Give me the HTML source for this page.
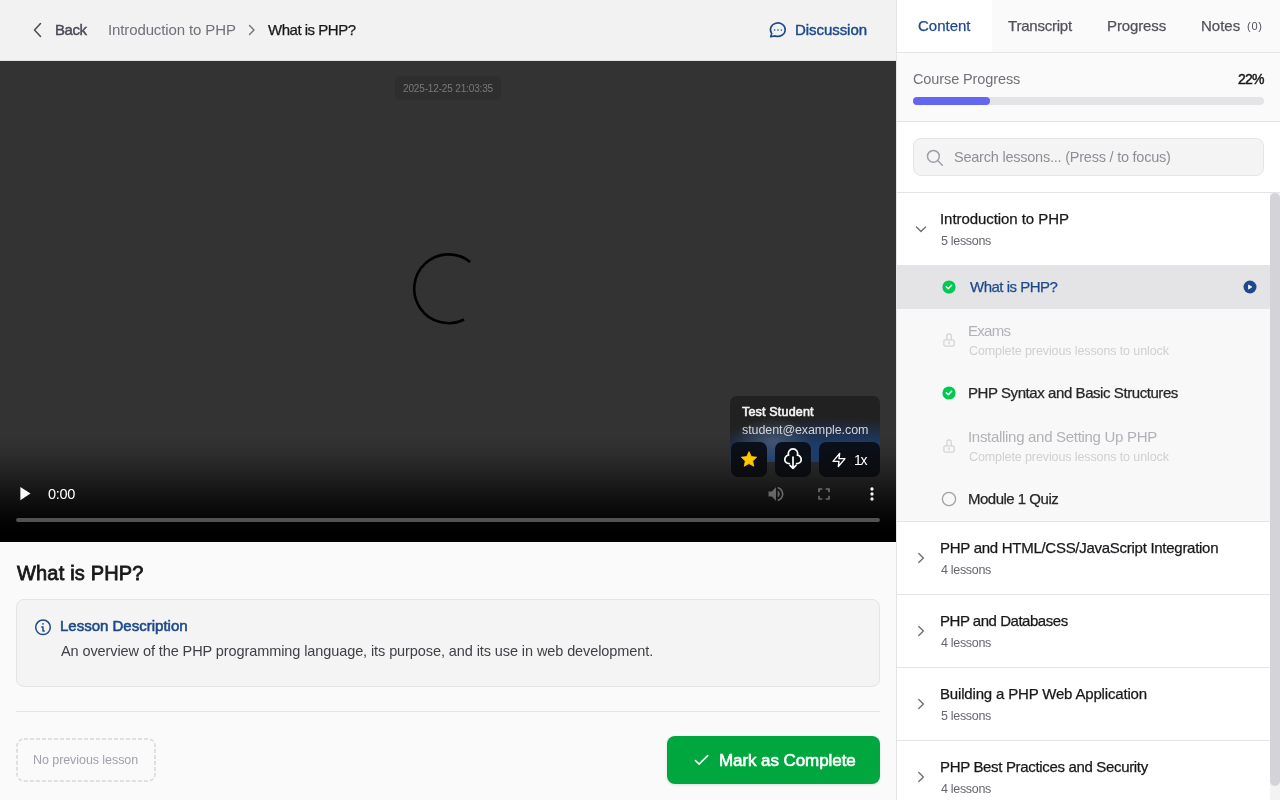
<!DOCTYPE html><html><head><meta charset="utf-8"><style>*{box-sizing:border-box;margin:0;padding:0}
html,body{width:1280px;height:800px;overflow:hidden;background:#fafafa;font-family:"Liberation Sans",sans-serif;color:#18181b}
svg{position:absolute;overflow:visible}
.t{position:absolute;white-space:nowrap;line-height:1;will-change:transform}
.bl{display:inline-block;width:0;height:0}
</style></head><body>
<!-- header -->
<div style="position:absolute;left:0;top:0;width:896px;height:61px;background:#f2f2f2;border-bottom:1px solid #e4e4e7"></div>
<svg style="left:0;top:0" width="1" height="1"><path d="M40.5 23.5 L34.5 30 L40.5 36.5" fill="none" stroke="#4a4a55" stroke-width="1.5" stroke-linecap="round" stroke-linejoin="round"/></svg>
<svg style="left:0;top:0" width="1" height="1"><path d="M249.5 25.5 L254 30 L249.5 34.5" fill="none" stroke="#71717a" stroke-width="1.4" stroke-linecap="round" stroke-linejoin="round"/></svg>
<svg style="left:0;top:0" width="1" height="1"><path d="M771.7 33.4 L770.7 36.7 L775.2 35.9 A7.4 6.7 0 1 0 771.7 33.4 Z" fill="none" stroke="#1e4a8a" stroke-width="1.6" stroke-linejoin="round"/><path d="M774.6 30h.01M778 30h.01M781.4 30h.01" stroke="#1e4a8a" stroke-width="1.6" stroke-linecap="round"/></svg>
<!-- video -->
<div style="position:absolute;left:0;top:61px;width:896px;height:481px;background:#333333;overflow:hidden">
  <div style="position:absolute;left:0;top:371px;width:896px;height:110px;background:linear-gradient(to bottom,rgba(0,0,0,0) 0%,rgba(0,0,0,0.02) 6%,rgba(0,0,0,0.06) 12%,rgba(0,0,0,0.13) 20%,rgba(0,0,0,0.25) 30%,rgba(0,0,0,0.39) 40%,rgba(0,0,0,0.53) 50%,rgba(0,0,0,0.67) 60%,rgba(0,0,0,0.80) 70%,rgba(0,0,0,0.92) 80%,rgba(0,0,0,0.97) 86%,#000 92%,#000 100%)"></div>
  <div style="position:absolute;left:395px;top:15px;width:106px;height:24px;border-radius:5px;background:#2e2e2e"></div>
  <div style="position:absolute;left:16px;top:457px;width:864px;height:4px;border-radius:2px;background:#525252"></div>
</div>
<svg style="left:0;top:0" width="1" height="1"><path d="M 470.1 261.9 A 34.4 34.4 0 1 0 464.0 319.5" fill="none" stroke="#000" stroke-width="2.6"/></svg>
<svg style="left:0;top:0" width="1" height="1"><path d="M20.4 487 L20.4 500.2 L30.5 493.6 Z" fill="#fff"/>
<g fill="#6a6a6a"><rect x="775" y="487" width="1" height="1" fill-opacity="0.27"/><rect x="777" y="487" width="1" height="1" fill-opacity="0.33"/><rect x="778" y="487" width="1" height="1" fill-opacity="0.89"/><rect x="779" y="487" width="1" height="1" fill-opacity="0.44"/><rect x="774" y="488" width="1" height="1" fill-opacity="0.24"/><rect x="775" y="488" width="1" height="1" fill-opacity="0.97"/><rect x="777" y="488" width="1" height="1" fill-opacity="0.19"/><rect x="778" y="488" width="1" height="1" fill-opacity="0.87"/><rect x="779" y="488" width="1" height="1" fill-opacity="1.00"/><rect x="780" y="488" width="1" height="1" fill-opacity="0.81"/><rect x="781" y="488" width="1" height="1" fill-opacity="0.10"/><rect x="773" y="489" width="1" height="1" fill-opacity="0.24"/><rect x="774" y="489" width="1" height="1" fill-opacity="0.94"/><rect x="775" y="489" width="1" height="1" fill-opacity="0.99"/><rect x="779" y="489" width="1" height="1" fill-opacity="0.44"/><rect x="780" y="489" width="1" height="1" fill-opacity="0.99"/><rect x="781" y="489" width="1" height="1" fill-opacity="0.87"/><rect x="772" y="490" width="1" height="1" fill-opacity="0.22"/><rect x="773" y="490" width="1" height="1" fill-opacity="0.94"/><rect x="774" y="490" width="1" height="1" fill-opacity="0.97"/><rect x="775" y="490" width="1" height="1" fill-opacity="0.97"/><rect x="780" y="490" width="1" height="1" fill-opacity="0.42"/><rect x="781" y="490" width="1" height="1" fill-opacity="0.97"/><rect x="782" y="490" width="1" height="1" fill-opacity="0.47"/><rect x="768" y="491" width="1" height="1" fill-opacity="0.23"/><rect x="769" y="491" width="1" height="1" fill-opacity="0.48"/><rect x="770" y="491" width="1" height="1" fill-opacity="0.48"/><rect x="771" y="491" width="1" height="1" fill-opacity="0.49"/><rect x="772" y="491" width="1" height="1" fill-opacity="0.92"/><rect x="773" y="491" width="1" height="1" fill-opacity="0.97"/><rect x="774" y="491" width="1" height="1" fill-opacity="0.97"/><rect x="775" y="491" width="1" height="1" fill-opacity="0.97"/><rect x="777" y="491" width="1" height="1" fill-opacity="0.32"/><rect x="778" y="491" width="1" height="1" fill-opacity="0.67"/><rect x="781" y="491" width="1" height="1" fill-opacity="0.84"/><rect x="782" y="491" width="1" height="1" fill-opacity="0.92"/><rect x="768" y="492" width="1" height="1" fill-opacity="0.47"/><rect x="769" y="492" width="1" height="1" fill-opacity="0.97"/><rect x="770" y="492" width="1" height="1" fill-opacity="0.96"/><rect x="771" y="492" width="1" height="1" fill-opacity="0.97"/><rect x="772" y="492" width="1" height="1" fill-opacity="0.96"/><rect x="773" y="492" width="1" height="1" fill-opacity="0.97"/><rect x="774" y="492" width="1" height="1" fill-opacity="0.96"/><rect x="775" y="492" width="1" height="1" fill-opacity="0.97"/><rect x="777" y="492" width="1" height="1" fill-opacity="0.32"/><rect x="778" y="492" width="1" height="1" fill-opacity="0.96"/><rect x="779" y="492" width="1" height="1" fill-opacity="0.36"/><rect x="781" y="492" width="1" height="1" fill-opacity="0.45"/><rect x="782" y="492" width="1" height="1" fill-opacity="0.96"/><rect x="783" y="492" width="1" height="1" fill-opacity="0.23"/><rect x="768" y="493" width="1" height="1" fill-opacity="0.47"/><rect x="769" y="493" width="1" height="1" fill-opacity="0.96"/><rect x="770" y="493" width="1" height="1" fill-opacity="0.96"/><rect x="771" y="493" width="1" height="1" fill-opacity="0.96"/><rect x="772" y="493" width="1" height="1" fill-opacity="0.96"/><rect x="773" y="493" width="1" height="1" fill-opacity="0.96"/><rect x="774" y="493" width="1" height="1" fill-opacity="0.96"/><rect x="775" y="493" width="1" height="1" fill-opacity="0.96"/><rect x="777" y="493" width="1" height="1" fill-opacity="0.32"/><rect x="778" y="493" width="1" height="1" fill-opacity="0.96"/><rect x="779" y="493" width="1" height="1" fill-opacity="0.64"/><rect x="781" y="493" width="1" height="1" fill-opacity="0.26"/><rect x="782" y="493" width="1" height="1" fill-opacity="0.96"/><rect x="783" y="493" width="1" height="1" fill-opacity="0.41"/><rect x="768" y="494" width="1" height="1" fill-opacity="0.47"/><rect x="769" y="494" width="1" height="1" fill-opacity="0.95"/><rect x="770" y="494" width="1" height="1" fill-opacity="0.95"/><rect x="771" y="494" width="1" height="1" fill-opacity="0.95"/><rect x="772" y="494" width="1" height="1" fill-opacity="0.95"/><rect x="773" y="494" width="1" height="1" fill-opacity="0.95"/><rect x="774" y="494" width="1" height="1" fill-opacity="0.95"/><rect x="775" y="494" width="1" height="1" fill-opacity="0.95"/><rect x="777" y="494" width="1" height="1" fill-opacity="0.32"/><rect x="778" y="494" width="1" height="1" fill-opacity="0.95"/><rect x="779" y="494" width="1" height="1" fill-opacity="0.64"/><rect x="781" y="494" width="1" height="1" fill-opacity="0.23"/><rect x="782" y="494" width="1" height="1" fill-opacity="0.95"/><rect x="783" y="494" width="1" height="1" fill-opacity="0.43"/><rect x="768" y="495" width="1" height="1" fill-opacity="0.47"/><rect x="769" y="495" width="1" height="1" fill-opacity="0.95"/><rect x="770" y="495" width="1" height="1" fill-opacity="0.95"/><rect x="771" y="495" width="1" height="1" fill-opacity="0.95"/><rect x="772" y="495" width="1" height="1" fill-opacity="0.95"/><rect x="773" y="495" width="1" height="1" fill-opacity="0.95"/><rect x="774" y="495" width="1" height="1" fill-opacity="0.95"/><rect x="775" y="495" width="1" height="1" fill-opacity="0.95"/><rect x="777" y="495" width="1" height="1" fill-opacity="0.32"/><rect x="778" y="495" width="1" height="1" fill-opacity="0.95"/><rect x="779" y="495" width="1" height="1" fill-opacity="0.34"/><rect x="781" y="495" width="1" height="1" fill-opacity="0.37"/><rect x="782" y="495" width="1" height="1" fill-opacity="0.95"/><rect x="783" y="495" width="1" height="1" fill-opacity="0.28"/><rect x="768" y="496" width="1" height="1" fill-opacity="0.21"/><rect x="769" y="496" width="1" height="1" fill-opacity="0.47"/><rect x="770" y="496" width="1" height="1" fill-opacity="0.46"/><rect x="771" y="496" width="1" height="1" fill-opacity="0.47"/><rect x="772" y="496" width="1" height="1" fill-opacity="0.88"/><rect x="773" y="496" width="1" height="1" fill-opacity="0.95"/><rect x="774" y="496" width="1" height="1" fill-opacity="0.93"/><rect x="775" y="496" width="1" height="1" fill-opacity="0.95"/><rect x="777" y="496" width="1" height="1" fill-opacity="0.32"/><rect x="778" y="496" width="1" height="1" fill-opacity="0.62"/><rect x="781" y="496" width="1" height="1" fill-opacity="0.74"/><rect x="782" y="496" width="1" height="1" fill-opacity="0.91"/><rect x="772" y="497" width="1" height="1" fill-opacity="0.21"/><rect x="773" y="497" width="1" height="1" fill-opacity="0.90"/><rect x="774" y="497" width="1" height="1" fill-opacity="0.94"/><rect x="775" y="497" width="1" height="1" fill-opacity="0.94"/><rect x="780" y="497" width="1" height="1" fill-opacity="0.38"/><rect x="781" y="497" width="1" height="1" fill-opacity="0.94"/><rect x="782" y="497" width="1" height="1" fill-opacity="0.56"/><rect x="773" y="498" width="1" height="1" fill-opacity="0.22"/><rect x="774" y="498" width="1" height="1" fill-opacity="0.90"/><rect x="775" y="498" width="1" height="1" fill-opacity="0.92"/><rect x="779" y="498" width="1" height="1" fill-opacity="0.40"/><rect x="780" y="498" width="1" height="1" fill-opacity="0.92"/><rect x="781" y="498" width="1" height="1" fill-opacity="0.82"/><rect x="782" y="498" width="1" height="1" fill-opacity="0.06"/><rect x="774" y="499" width="1" height="1" fill-opacity="0.24"/><rect x="775" y="499" width="1" height="1" fill-opacity="0.89"/><rect x="777" y="499" width="1" height="1" fill-opacity="0.16"/><rect x="778" y="499" width="1" height="1" fill-opacity="0.81"/><rect x="779" y="499" width="1" height="1" fill-opacity="0.92"/><rect x="780" y="499" width="1" height="1" fill-opacity="0.75"/><rect x="781" y="499" width="1" height="1" fill-opacity="0.09"/><rect x="775" y="500" width="1" height="1" fill-opacity="0.25"/><rect x="777" y="500" width="1" height="1" fill-opacity="0.30"/><rect x="778" y="500" width="1" height="1" fill-opacity="0.91"/><rect x="779" y="500" width="1" height="1" fill-opacity="0.49"/><rect x="777" y="501" width="1" height="1" fill-opacity="0.06"/></g>
<g fill="#6a6a6a"><rect x="818" y="488" width="1" height="1" fill-opacity="0.67"/><rect x="819" y="488" width="1" height="1" fill-opacity="0.80"/><rect x="820" y="488" width="1" height="1" fill-opacity="0.80"/><rect x="821" y="488" width="1" height="1" fill-opacity="0.80"/><rect x="822" y="488" width="1" height="1" fill-opacity="0.26"/><rect x="825" y="488" width="1" height="1" fill-opacity="0.26"/><rect x="826" y="488" width="1" height="1" fill-opacity="0.80"/><rect x="827" y="488" width="1" height="1" fill-opacity="0.80"/><rect x="828" y="488" width="1" height="1" fill-opacity="0.80"/><rect x="829" y="488" width="1" height="1" fill-opacity="0.65"/><rect x="818" y="489" width="1" height="1" fill-opacity="0.87"/><rect x="819" y="489" width="1" height="1" fill-opacity="1.00"/><rect x="820" y="489" width="1" height="1" fill-opacity="0.79"/><rect x="821" y="489" width="1" height="1" fill-opacity="0.79"/><rect x="822" y="489" width="1" height="1" fill-opacity="0.25"/><rect x="825" y="489" width="1" height="1" fill-opacity="0.25"/><rect x="826" y="489" width="1" height="1" fill-opacity="0.79"/><rect x="827" y="489" width="1" height="1" fill-opacity="0.79"/><rect x="828" y="489" width="1" height="1" fill-opacity="1.00"/><rect x="829" y="489" width="1" height="1" fill-opacity="0.87"/><rect x="818" y="490" width="1" height="1" fill-opacity="0.87"/><rect x="819" y="490" width="1" height="1" fill-opacity="0.87"/><rect x="828" y="490" width="1" height="1" fill-opacity="0.87"/><rect x="829" y="490" width="1" height="1" fill-opacity="0.87"/><rect x="818" y="491" width="1" height="1" fill-opacity="0.86"/><rect x="819" y="491" width="1" height="1" fill-opacity="0.86"/><rect x="828" y="491" width="1" height="1" fill-opacity="0.86"/><rect x="829" y="491" width="1" height="1" fill-opacity="0.86"/><rect x="818" y="492" width="1" height="1" fill-opacity="0.19"/><rect x="819" y="492" width="1" height="1" fill-opacity="0.20"/><rect x="828" y="492" width="1" height="1" fill-opacity="0.19"/><rect x="829" y="492" width="1" height="1" fill-opacity="0.20"/><rect x="818" y="495" width="1" height="1" fill-opacity="0.19"/><rect x="819" y="495" width="1" height="1" fill-opacity="0.19"/><rect x="828" y="495" width="1" height="1" fill-opacity="0.19"/><rect x="829" y="495" width="1" height="1" fill-opacity="0.19"/><rect x="818" y="496" width="1" height="1" fill-opacity="0.82"/><rect x="819" y="496" width="1" height="1" fill-opacity="0.83"/><rect x="828" y="496" width="1" height="1" fill-opacity="0.82"/><rect x="829" y="496" width="1" height="1" fill-opacity="0.83"/><rect x="818" y="497" width="1" height="1" fill-opacity="0.82"/><rect x="819" y="497" width="1" height="1" fill-opacity="0.82"/><rect x="828" y="497" width="1" height="1" fill-opacity="0.82"/><rect x="829" y="497" width="1" height="1" fill-opacity="0.82"/><rect x="818" y="498" width="1" height="1" fill-opacity="0.81"/><rect x="819" y="498" width="1" height="1" fill-opacity="0.93"/><rect x="820" y="498" width="1" height="1" fill-opacity="0.73"/><rect x="821" y="498" width="1" height="1" fill-opacity="0.73"/><rect x="822" y="498" width="1" height="1" fill-opacity="0.23"/><rect x="825" y="498" width="1" height="1" fill-opacity="0.24"/><rect x="826" y="498" width="1" height="1" fill-opacity="0.73"/><rect x="827" y="498" width="1" height="1" fill-opacity="0.73"/><rect x="828" y="498" width="1" height="1" fill-opacity="0.93"/><rect x="829" y="498" width="1" height="1" fill-opacity="0.81"/><rect x="818" y="499" width="1" height="1" fill-opacity="0.61"/><rect x="819" y="499" width="1" height="1" fill-opacity="0.72"/><rect x="820" y="499" width="1" height="1" fill-opacity="0.72"/><rect x="821" y="499" width="1" height="1" fill-opacity="0.72"/><rect x="822" y="499" width="1" height="1" fill-opacity="0.23"/><rect x="825" y="499" width="1" height="1" fill-opacity="0.24"/><rect x="826" y="499" width="1" height="1" fill-opacity="0.73"/><rect x="827" y="499" width="1" height="1" fill-opacity="0.72"/><rect x="828" y="499" width="1" height="1" fill-opacity="0.72"/><rect x="829" y="499" width="1" height="1" fill-opacity="0.60"/></g>
<g fill="#fff"><rect x="870" y="487" width="1" height="1" fill-opacity="0.09"/><rect x="871" y="487" width="1" height="1" fill-opacity="0.56"/><rect x="872" y="487" width="1" height="1" fill-opacity="0.56"/><rect x="873" y="487" width="1" height="1" fill-opacity="0.07"/><rect x="870" y="488" width="1" height="1" fill-opacity="0.50"/><rect x="871" y="488" width="1" height="1" fill-opacity="1.00"/><rect x="872" y="488" width="1" height="1" fill-opacity="1.00"/><rect x="873" y="488" width="1" height="1" fill-opacity="0.46"/><rect x="870" y="489" width="1" height="1" fill-opacity="0.49"/><rect x="871" y="489" width="1" height="1" fill-opacity="0.99"/><rect x="872" y="489" width="1" height="1" fill-opacity="0.99"/><rect x="873" y="489" width="1" height="1" fill-opacity="0.49"/><rect x="870" y="490" width="1" height="1" fill-opacity="0.07"/><rect x="871" y="490" width="1" height="1" fill-opacity="0.54"/><rect x="872" y="490" width="1" height="1" fill-opacity="0.54"/><rect x="873" y="490" width="1" height="1" fill-opacity="0.07"/><rect x="871" y="492" width="1" height="1" fill-opacity="0.55"/><rect x="872" y="492" width="1" height="1" fill-opacity="0.53"/><rect x="873" y="492" width="1" height="1" fill-opacity="0.07"/><rect x="870" y="493" width="1" height="1" fill-opacity="0.47"/><rect x="871" y="493" width="1" height="1" fill-opacity="0.96"/><rect x="872" y="493" width="1" height="1" fill-opacity="0.96"/><rect x="873" y="493" width="1" height="1" fill-opacity="0.45"/><rect x="870" y="494" width="1" height="1" fill-opacity="0.47"/><rect x="871" y="494" width="1" height="1" fill-opacity="0.95"/><rect x="872" y="494" width="1" height="1" fill-opacity="0.95"/><rect x="873" y="494" width="1" height="1" fill-opacity="0.47"/><rect x="870" y="495" width="1" height="1" fill-opacity="0.07"/><rect x="871" y="495" width="1" height="1" fill-opacity="0.53"/><rect x="872" y="495" width="1" height="1" fill-opacity="0.53"/><rect x="873" y="495" width="1" height="1" fill-opacity="0.07"/><rect x="870" y="497" width="1" height="1" fill-opacity="0.06"/><rect x="871" y="497" width="1" height="1" fill-opacity="0.52"/><rect x="872" y="497" width="1" height="1" fill-opacity="0.52"/><rect x="873" y="497" width="1" height="1" fill-opacity="0.06"/><rect x="870" y="498" width="1" height="1" fill-opacity="0.46"/><rect x="871" y="498" width="1" height="1" fill-opacity="0.92"/><rect x="872" y="498" width="1" height="1" fill-opacity="0.92"/><rect x="873" y="498" width="1" height="1" fill-opacity="0.44"/><rect x="870" y="499" width="1" height="1" fill-opacity="0.46"/><rect x="871" y="499" width="1" height="1" fill-opacity="0.92"/><rect x="872" y="499" width="1" height="1" fill-opacity="0.92"/><rect x="873" y="499" width="1" height="1" fill-opacity="0.46"/><rect x="870" y="500" width="1" height="1" fill-opacity="0.06"/><rect x="871" y="500" width="1" height="1" fill-opacity="0.52"/><rect x="872" y="500" width="1" height="1" fill-opacity="0.52"/><rect x="873" y="500" width="1" height="1" fill-opacity="0.06"/></g></svg>
<!-- user card -->
<div style="position:absolute;left:730px;top:396px;width:150px;height:65.5px;border-radius:7px 7px 0 0;overflow:hidden;background:#212121">
<div style="position:absolute;left:0;top:0;width:150px;height:66px;background:radial-gradient(ellipse 175px 46px at 112px 68px,rgba(29,61,112,1) 0%,rgba(29,61,112,0.92) 45%,rgba(29,61,112,0) 100%)"></div>
<div style="position:absolute;left:0;top:20px;width:150px;height:60px;background:radial-gradient(ellipse 40px 24px at 43px 25px,rgba(100,118,145,0.5) 0%,rgba(100,118,145,0) 100%)"></div>
</div>
<div style="position:absolute;left:731px;top:442px;width:36px;height:35px;border-radius:7px;background:linear-gradient(to bottom,#0a111b 0%,#0a0e15 45%,#0b0b0c 100%)"></div>
<div style="position:absolute;left:775px;top:442px;width:36px;height:35px;border-radius:7px;background:linear-gradient(to bottom,#0a111b 0%,#0a0e15 45%,#0b0b0c 100%)"></div>
<div style="position:absolute;left:819px;top:442px;width:61px;height:35px;border-radius:7px;background:linear-gradient(to bottom,#0a111b 0%,#0a0e15 45%,#0b0b0c 100%)"></div>
<svg style="left:0;top:0" width="1" height="1"><path d="M749.00 451.60 L751.29 456.54 L756.70 457.20 L752.71 460.91 L753.76 466.25 L749.00 463.60 L744.24 466.25 L745.29 460.91 L741.30 457.20 L746.71 456.54 Z" fill="#fcc800" stroke="#fcc800" stroke-width="0.8" stroke-linejoin="round"/></svg>
<svg style="left:0;top:0" width="1" height="1"><path d="M789.4 463.6 A4.2 4.2 0 0 1 788.6 455.2 A4.7 4.7 0 1 1 797.4 455.2 A4.2 4.2 0 0 1 796.6 463.6" fill="none" stroke="#fff" stroke-width="1.7" stroke-linecap="round" stroke-linejoin="round"/><path d="M793 457 V468.3 M790 465.3 L793 468.3 L796 465.3" fill="none" stroke="#fff" stroke-width="1.7" stroke-linecap="round" stroke-linejoin="round"/></svg>
<svg style="left:831px;top:451.5px" width="16" height="16" viewBox="0 0 24 24"><path d="M13 2 L3 14 h9 l-1 8 L21 10 h-9 l1 -8 z" fill="none" stroke="#fff" stroke-width="2.1" stroke-linejoin="round" stroke-linecap="round"/></svg>
<!-- below video -->
<div style="position:absolute;left:16px;top:599px;width:864px;height:88px;border-radius:8px;background:#f4f4f4;border:1px solid #e4e4e4"></div>
<svg style="left:0;top:0" width="1" height="1"><circle cx="43" cy="627.3" r="7.3" fill="none" stroke="#1e4a8a" stroke-width="1.5"/><path d="M43 623.8h.01" stroke="#1e4a8a" stroke-width="1.7" stroke-linecap="round"/><path d="M41.8 627 H43 V630.9 H44.2" fill="none" stroke="#1e4a8a" stroke-width="1.5" stroke-linecap="round" stroke-linejoin="round"/></svg>
<div style="position:absolute;left:16px;top:711px;width:864px;height:1px;background:#e4e4e4"></div>
<svg style="left:0;top:0" width="1" height="1"><rect x="17" y="739" width="138" height="42" rx="7" fill="none" stroke="#e0e0e3" stroke-width="2" stroke-dasharray="4 2"/></svg>
<div style="position:absolute;left:667px;top:736px;width:213px;height:48px;border-radius:8px;background:#00a63e;box-shadow:0 1px 3px rgba(0,0,0,0.12)"></div>
<svg style="left:0;top:0" width="1" height="1"><path d="M695.4 760.5 L699.1 764.1 L707.7 755.6" fill="none" stroke="#fff" stroke-width="1.6" stroke-linecap="round" stroke-linejoin="round"/></svg>
<!-- sidebar -->
<div style="position:absolute;left:896px;top:0;width:384px;height:800px;background:#fff;border-left:1px solid #e4e4e7"></div>
<div style="position:absolute;left:897px;top:0;width:383px;height:52px;background:#fafafa"></div>
<div style="position:absolute;left:897px;top:0;width:95px;height:52px;background:#fff"></div>
<div style="position:absolute;left:897px;top:52px;width:383px;height:1px;background:#e4e4e7"></div>
<div style="position:absolute;left:897px;top:53px;width:383px;height:68px;background:#fafafa"></div>
<div style="position:absolute;left:897px;top:121px;width:383px;height:1px;background:#e4e4e7"></div>
<div style="position:absolute;left:913px;top:97px;width:351px;height:8px;border-radius:4px;background:#e4e4e7"></div>
<div style="position:absolute;left:913px;top:97px;width:77px;height:8px;border-radius:4px;background:#6366f1"></div>
<div style="position:absolute;left:913px;top:138px;width:351px;height:38px;border-radius:8px;background:#f4f4f5;border:1px solid #e4e4e7"></div>
<svg style="left:0;top:0" width="1" height="1"><circle cx="933.4" cy="156.3" r="5.9" fill="none" stroke="#9f9fa9" stroke-width="1.5"/><path d="M937.9 160.8 L942.3 165.2" stroke="#9f9fa9" stroke-width="1.5" stroke-linecap="round"/></svg>
<div style="position:absolute;left:897px;top:192px;width:383px;height:1px;background:#e4e4e7"></div>
<div style="position:absolute;left:897px;top:193px;width:373px;height:72px;background:#fff"></div>
<svg style="left:0;top:0" width="1" height="1"><path d="M916.4 227 L921 231.5 L925.6 227" fill="none" stroke="#71717a" stroke-width="1.4" stroke-linecap="round" stroke-linejoin="round"/></svg>
<div style="position:absolute;left:897px;top:265px;width:373px;height:256px;background:#f8f8f8"></div>
<div style="position:absolute;left:897px;top:265px;width:373px;height:44px;background:#e4e4e7"></div>
<svg style="left:0;top:0" width="1" height="1"><circle cx="949" cy="287" r="6.6" fill="#00c950"/><path d="M946.3 286.8 L948.3 288.7 L951.6 285.2" fill="none" stroke="#fff" stroke-width="1.5" stroke-linecap="round" stroke-linejoin="round"/></svg>
<svg style="left:0;top:0" width="1" height="1"><circle cx="1250" cy="287" r="6.5" fill="#1e4a8a"/><path d="M1248.5 284.9 L1251.9 287 L1248.5 289.1 Z" fill="#fff" stroke="#fff" stroke-width="0.7" stroke-linejoin="round"/></svg>
<svg style="left:942px;top:333px" width="14" height="14" viewBox="0 0 14 14"><rect x="1.85" y="6.95" width="10.3" height="6.1" rx="1.6" fill="none" stroke="#d4d4d8" stroke-width="1.3"/><path d="M4.9 6.95 V3.05 A2.175 2.175 0 0 1 9.25 3.05 V6.95" fill="none" stroke="#d4d4d8" stroke-width="1.3"/><path d="M7.05 8.8 V10.9" stroke="#d4d4d8" stroke-width="1.3" stroke-linecap="round"/></svg>
<svg style="left:0;top:0" width="1" height="1"><circle cx="949" cy="393" r="6.6" fill="#00c950"/><path d="M946.3 392.8 L948.3 394.7 L951.6 391.2" fill="none" stroke="#fff" stroke-width="1.5" stroke-linecap="round" stroke-linejoin="round"/></svg>
<svg style="left:942px;top:439px" width="14" height="14" viewBox="0 0 14 14"><rect x="1.85" y="6.95" width="10.3" height="6.1" rx="1.6" fill="none" stroke="#d4d4d8" stroke-width="1.3"/><path d="M4.9 6.95 V3.05 A2.175 2.175 0 0 1 9.25 3.05 V6.95" fill="none" stroke="#d4d4d8" stroke-width="1.3"/><path d="M7.05 8.8 V10.9" stroke="#d4d4d8" stroke-width="1.3" stroke-linecap="round"/></svg>
<svg style="left:0;top:0" width="1" height="1"><circle cx="949" cy="499" r="6.6" fill="none" stroke="#a1a1aa" stroke-width="1.3"/></svg>
<div style="position:absolute;left:897px;top:521px;width:373px;height:1px;background:#e4e4e7"></div>
<svg style="left:0;top:0" width="1" height="1"><path d="M918.8 553.4 L923.4 558 L918.8 562.6" fill="none" stroke="#71717a" stroke-width="1.4" stroke-linecap="round" stroke-linejoin="round"/></svg>
<div style="position:absolute;left:897px;top:594px;width:373px;height:1px;background:#e4e4e7"></div>
<svg style="left:0;top:0" width="1" height="1"><path d="M918.8 626.4 L923.4 631 L918.8 635.6" fill="none" stroke="#71717a" stroke-width="1.4" stroke-linecap="round" stroke-linejoin="round"/></svg>
<div style="position:absolute;left:897px;top:667px;width:373px;height:1px;background:#e4e4e7"></div>
<svg style="left:0;top:0" width="1" height="1"><path d="M918.8 699.4 L923.4 704 L918.8 708.6" fill="none" stroke="#71717a" stroke-width="1.4" stroke-linecap="round" stroke-linejoin="round"/></svg>
<div style="position:absolute;left:897px;top:740px;width:373px;height:1px;background:#e4e4e7"></div>
<svg style="left:0;top:0" width="1" height="1"><path d="M918.8 772.4 L923.4 777 L918.8 781.6" fill="none" stroke="#71717a" stroke-width="1.4" stroke-linecap="round" stroke-linejoin="round"/></svg>
<div style="position:absolute;left:1270px;top:193px;width:10px;height:607px;background:#f3f3f3"></div>
<div style="position:absolute;left:1270px;top:193px;width:9.5px;height:593px;border-radius:5px;background:#d4d4d8"></div>

<div id="back" class="t" style="left:55.00px;top:22.00px;font-size:15px;-webkit-text-stroke:0.45px #4b4b57;color:#4b4b57;letter-spacing:-0.467px">Back<span class="bl"></span></div>
<div id="introh" class="t" style="left:107.50px;top:22.00px;font-size:15px;color:#71717a;letter-spacing:-0.120px">Introduction to PHP<span class="bl"></span></div>
<div id="whath" class="t" style="left:268.00px;top:22.00px;font-size:15px;-webkit-text-stroke:0.25px #18181b;color:#18181b;letter-spacing:-0.482px">What is PHP?<span class="bl"></span></div>
<div id="disc" class="t" style="left:795.00px;top:22.00px;font-size:15px;-webkit-text-stroke:0.45px #1e4a8a;color:#1e4a8a;letter-spacing:-0.057px">Discussion<span class="bl"></span></div>
<div id="ts" class="t" style="left:403.00px;top:84.00px;font-size:10px;color:#7a7a7a;letter-spacing:-0.150px">2025-12-25 21:03:35<span class="bl"></span></div>
<div id="time" class="t" style="left:48.00px;top:487.00px;font-size:14.5px;color:#ffffff;letter-spacing:-0.333px">0:00<span class="bl"></span></div>
<div id="tstud" class="t" style="left:742.00px;top:406.00px;font-size:12.5px;-webkit-text-stroke:0.6px #f4f4f5;color:#f4f4f5;letter-spacing:0.189px">Test Student<span class="bl"></span></div>
<div id="email" class="t" style="left:742.00px;top:424.00px;font-size:12.5px;color:#d4d4d8;letter-spacing:-0.089px">student@example.com<span class="bl"></span></div>
<div id="onex" class="t" style="left:854.00px;top:453.00px;font-size:14px;color:#ffffff;letter-spacing:-1.400px">1x<span class="bl"></span></div>
<div id="h2" class="t" style="left:17.00px;top:563.00px;font-size:20px;-webkit-text-stroke:0.8px #18181b;color:#18181b;letter-spacing:0.182px">What is PHP?<span class="bl"></span></div>
<div id="ldesc" class="t" style="left:60.00px;top:618.00px;font-size:15px;-webkit-text-stroke:0.6px #1e4a8a;color:#1e4a8a;letter-spacing:0.000px">Lesson Description<span class="bl"></span></div>
<div id="desc" class="t" style="left:61.00px;top:644.00px;font-size:14.5px;color:#3f3f46;letter-spacing:-0.091px">An overview of the PHP programming language, its purpose, and its use in web development.<span class="bl"></span></div>
<div id="noprev" class="t" style="left:33.00px;top:754.00px;font-size:12.5px;color:#a1a1aa;letter-spacing:-0.068px">No previous lesson<span class="bl"></span></div>
<div id="mark" class="t" style="left:718.50px;top:752.00px;font-size:17px;-webkit-text-stroke:0.6px #ffffff;color:#ffffff;letter-spacing:-0.080px">Mark as Complete<span class="bl"></span></div>
<div id="tcontent" class="t" style="left:918.00px;top:18.00px;font-size:15px;-webkit-text-stroke:0.25px #1e4a8a;color:#1e4a8a;letter-spacing:0.000px">Content<span class="bl"></span></div>
<div id="ttrans" class="t" style="left:1008.00px;top:18.00px;font-size:15px;-webkit-text-stroke:0.25px #52525b;color:#52525b;letter-spacing:-0.222px">Transcript<span class="bl"></span></div>
<div id="tprog" class="t" style="left:1107.00px;top:18.00px;font-size:15px;-webkit-text-stroke:0.25px #52525b;color:#52525b;letter-spacing:-0.126px">Progress<span class="bl"></span></div>
<div id="tnotes" class="t" style="left:1201.00px;top:18.00px;font-size:15px;-webkit-text-stroke:0.25px #52525b;color:#52525b;letter-spacing:0.000px">Notes<span class="bl"></span></div>
<div id="tzero" class="t" style="left:1247.00px;top:21.00px;font-size:11px;color:#52525b;letter-spacing:0.750px">(0)<span class="bl"></span></div>
<div id="cprog" class="t" style="left:913.00px;top:72.00px;font-size:14.5px;color:#71717a;letter-spacing:-0.107px">Course Progress<span class="bl"></span></div>
<div id="pct" class="t" style="left:1237.50px;top:72.00px;font-size:14px;-webkit-text-stroke:0.45px #18181b;color:#18181b;letter-spacing:-0.750px">22%<span class="bl"></span></div>
<div id="search" class="t" style="left:953.50px;top:150.00px;font-size:14.5px;color:#8e8e96;letter-spacing:-0.226px">Search lessons... (Press / to focus)<span class="bl"></span></div>
<div id="m1" class="t" style="left:940.00px;top:211.00px;font-size:15px;-webkit-text-stroke:0.25px #18181b;color:#18181b;letter-spacing:-0.063px">Introduction to PHP<span class="bl"></span></div>
<div id="m1l" class="t" style="left:941.00px;top:235.00px;font-size:12.5px;color:#66666e;letter-spacing:-0.318px">5 lessons<span class="bl"></span></div>
<div id="l1" class="t" style="left:970.00px;top:279.00px;font-size:15px;-webkit-text-stroke:0.25px #1e4a8a;color:#1e4a8a;letter-spacing:-0.506px">What is PHP?<span class="bl"></span></div>
<div id="l2" class="t" style="left:968.00px;top:323.00px;font-size:15px;color:#b1b1b8;letter-spacing:-0.700px">Exams<span class="bl"></span></div>
<div id="l2s" class="t" style="left:969.00px;top:345.00px;font-size:12.5px;color:#d0d0d4;letter-spacing:-0.108px">Complete previous lessons to unlock<span class="bl"></span></div>
<div id="l3" class="t" style="left:968.00px;top:385.00px;font-size:15px;-webkit-text-stroke:0.25px #27272a;color:#27272a;letter-spacing:-0.427px">PHP Syntax and Basic Structures<span class="bl"></span></div>
<div id="l4" class="t" style="left:968.00px;top:429.00px;font-size:15px;color:#b1b1b8;letter-spacing:-0.300px">Installing and Setting Up PHP<span class="bl"></span></div>
<div id="l4s" class="t" style="left:969.00px;top:451.00px;font-size:12.5px;color:#d0d0d4;letter-spacing:-0.108px">Complete previous lessons to unlock<span class="bl"></span></div>
<div id="l5" class="t" style="left:968.00px;top:491.00px;font-size:15px;-webkit-text-stroke:0.25px #27272a;color:#27272a;letter-spacing:-0.500px">Module 1 Quiz<span class="bl"></span></div>
<div id="m2" class="t" style="left:940.00px;top:540.00px;font-size:15px;-webkit-text-stroke:0.25px #18181b;color:#18181b;letter-spacing:-0.276px">PHP and HTML/CSS/JavaScript Integration<span class="bl"></span></div>
<div id="m2l" class="t" style="left:941.00px;top:564.00px;font-size:12.5px;color:#66666e;letter-spacing:-0.318px">4 lessons<span class="bl"></span></div>
<div id="m3" class="t" style="left:940.00px;top:613.00px;font-size:15px;-webkit-text-stroke:0.25px #18181b;color:#18181b;letter-spacing:-0.469px">PHP and Databases<span class="bl"></span></div>
<div id="m3l" class="t" style="left:941.00px;top:637.00px;font-size:12.5px;color:#66666e;letter-spacing:-0.318px">4 lessons<span class="bl"></span></div>
<div id="m4" class="t" style="left:940.00px;top:686.00px;font-size:15px;-webkit-text-stroke:0.25px #18181b;color:#18181b;letter-spacing:-0.172px">Building a PHP Web Application<span class="bl"></span></div>
<div id="m4l" class="t" style="left:941.00px;top:710.00px;font-size:12.5px;color:#66666e;letter-spacing:-0.318px">5 lessons<span class="bl"></span></div>
<div id="m5" class="t" style="left:940.00px;top:759.00px;font-size:15px;-webkit-text-stroke:0.25px #18181b;color:#18181b;letter-spacing:-0.333px">PHP Best Practices and Security<span class="bl"></span></div>
<div id="m5l" class="t" style="left:941.00px;top:783.00px;font-size:12.5px;color:#66666e;letter-spacing:-0.318px">4 lessons<span class="bl"></span></div>
</body></html>
